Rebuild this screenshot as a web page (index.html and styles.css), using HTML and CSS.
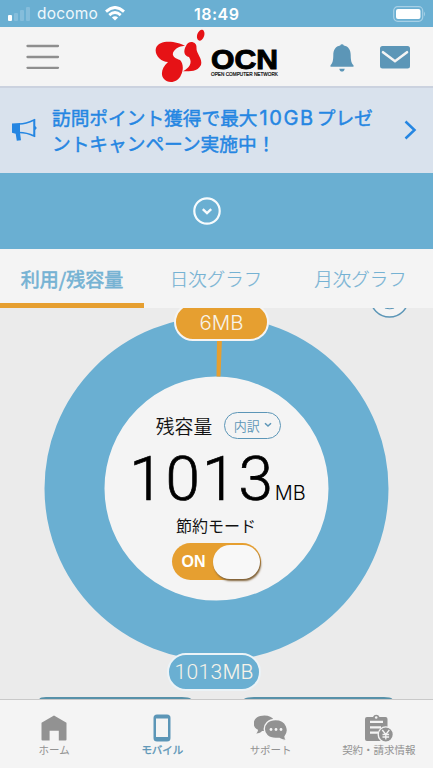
FILE: index.html
```html
<!DOCTYPE html>
<html lang="ja">
<head>
<meta charset="utf-8">
<meta name="viewport" content="width=device-width">
<title>OCN</title>
<link rel="stylesheet" href="styles.css">
</head>
<body>
<div class="status">
  <svg class="signal" width="22" height="14" viewBox="0 0 22 14"><rect x="0" y="8" width="4" height="6" rx="1" fill="#fff"/><g fill="#85bddb"><rect x="6" y="6" width="4" height="8" rx="1"/><rect x="12" y="3" width="4" height="11" rx="1"/><rect x="18" y="0" width="4" height="14" rx="1"/></g></svg>
  <span class="carrier">docomo</span>
  <svg class="wifi" width="20" height="15" viewBox="0 0 20 15" fill="none" stroke="#fff" stroke-width="2.8"><path d="M1 5.6Q10-2.7 19 5.6M4.3 9.1Q10 4 15.7 9.1"/><path d="M10 14.6L6.9 11.5Q10 9 13.1 11.5Z" fill="#fff" stroke="none"/></svg>
  <span class="clock">18:49</span>
  <svg class="battery" width="33" height="16" viewBox="0 0 33 16"><rect x=".7" y=".7" width="29" height="14.6" rx="4" fill="none" stroke="#a7d0e6" stroke-width="1.2"/><rect x="3" y="3" width="24.5" height="10" rx="2" fill="#fff"/><path d="M31 5.5q2 2.5 0 5z" fill="#a7d0e6"/></svg>
</div>
<header class="header">
  <svg class="menu" width="34" height="26" viewBox="0 0 34 26" stroke="#8e8e8e" stroke-width="2.3" stroke-linecap="round"><path d="M1.5 2h30.5M1.5 13h30.5M1.5 23.8h30.5"/></svg>
  <div class="logo">
    <svg class="mark" width="50" height="54" viewBox="0 0 50 54" fill="#e61216"><ellipse cx="45.7" cy="6.2" rx="3.5" ry="5.6" transform="rotate(18 45.7 6.2)"/><path d="M30 17C22 12 4 10 1 19C-1 26 6 33 13 33C7 38 5 46 9 50C13 55 23 54 26 46C29 40 28 34 25 31C19 29 16 26 19 22C22 18 26 17 30 17Z"/><path d="M31 17C33 11 42 12 41.500 19C41 24 48 30 46 36C42 43 36 42 28 42.200C34 39 38 34 34 28C29 27 28 22 31 17Z"/></svg>
    <svg class="wordmark" width="69" height="32" viewBox="0 0 69 32"><text x="0" y="21.500" class="brand" textLength="67" lengthAdjust="spacingAndGlyphs">OCN</text><text x="0" y="29" class="tagline" textLength="67" lengthAdjust="spacingAndGlyphs">OPEN COMPUTER NETWORK</text></svg>
  </div>
  <svg class="bell" width="24" height="29" viewBox="0 0 24 29" fill="#5c96b7"><path d="M10.200 2.500a1.900 1.900 0 0 1 3.600 0C18.500 3.300 20.700 7 20.700 12c0 6 .9 8.300 2.800 10.300v1.400H.5v-1.400C2.400 20.300 3.300 18 3.300 12c0-5 2.200-8.700 6.900-9.500zM9.300 25.700h5.400c-.5 3.800-4.900 3.800-5.400 0z"/></svg>
  <svg class="mail" width="30" height="23" viewBox="0 0 30 23"><rect width="30" height="22.500" rx="2.500" fill="#5c96b7"/><path d="M3 6.200l12 9 12-9" fill="none" stroke="#f4f4f4" stroke-width="2.600" stroke-linecap="round"/></svg>
</header>
<div class="banner">
  <svg class="horn" width="26" height="24" viewBox="0 0 26 24" fill="#2586e2"><path d="M0 5.500l8-.6v9.800l1 7.500-4.200.6-1.100-7L0 14.800z"/><path d="M7 6c6 0 10-1.500 15-4v16c-5-2.500-9-3.500-15-3.500" fill="none" stroke="#2586e2" stroke-width="1.500"/><path d="M22 1h1.300v7l1.500 2-1.500 2v7H22z"/></svg>
  <p class="message">訪問ポイント獲得で最大<span class="size">10GB</span>プレゼ<br>ントキャンペーン実施中！</p>
  <svg class="arrow" width="13" height="20" viewBox="0 0 13 20" fill="none" stroke="#2586e2" stroke-width="2.500"><path d="M1.500 1.500L10.500 10 1.500 18.500"/></svg>
</div>
<div class="expander">
  <svg width="28" height="28" viewBox="0 0 28 28" fill="none" stroke="#f7fbfd" stroke-width="2.200"><circle cx="14" cy="14" r="12.700"/><path d="M9.800 12.200l4.200 3.900 4.200-3.900" stroke-width="2.400"/></svg>
</div>
<nav class="tabs">
  <span class="tab active">利用/残容量</span>
  <span class="tab">日次グラフ</span>
  <span class="tab">月次グラフ</span>
</nav>
<main class="usage">
  <svg class="chart" width="433" height="392" viewBox="0 308 433 392">
    <circle cx="216.500" cy="488.500" r="142" fill="#f4f4f4" stroke="#6aafd2" stroke-width="60"/>
    <path d="M217 338h5l-1.500 38.500h-4z" fill="#e69f30"/>
    <circle cx="389.500" cy="298" r="19" fill="#f4f4f4" stroke="#5c96b7" stroke-width="1.500"/>
    <path d="M385 308q5 1.500 9 0" fill="none" stroke="#5c96b7" stroke-width="1.200"/>
    <path d="M40 700q0-2 6-2h136q7 0 9 2M244 700q3-2 10-2h130q7 0 8 2" fill="none" stroke="#5791a9" stroke-width="1.800"/>
  </svg>
  <span class="pill used">6MB</span>
  <span class="pill left"><span class="digits">1013</span>MB</span>
  <section class="summary">
    <div class="title"><span>残容量</span><span class="details">内訳<svg width="8" height="6" viewBox="0 0 8 6" fill="none" stroke="#5c96b7" stroke-width="1.500"><path d="M1 1.200l3 2.800 3-2.800"/></svg></span></div>
    <div class="amount"><span class="number">1013</span><span class="unit">MB</span></div>
    <div class="mode">節約モード</div>
    <div class="switch"><span>ON</span><i class="knob"></i></div>
  </section>
</main>
<nav class="bottom">
  <div class="item"><svg width="28" height="28" viewBox="0 0 28 28" fill="#929292"><path d="M14 1.500l12.500 7.200v16.800a1 1 0 0 1-1 1h-6.700v-9.700H9.600v9.700H2.500a1 1 0 0 1-1-1V8.700z"/></svg><span>ホーム</span></div>
  <div class="item current"><svg width="28" height="28" viewBox="0 0 28 28"><rect x="5.500" y=".5" width="17" height="27" rx="3.500" fill="#5c96b7"/><rect x="8" y="4.500" width="12" height="18.500" fill="#f4f4f4"/></svg><span>モバイル</span></div>
  <div class="item"><svg width="34" height="28" viewBox="0 0 34 28" fill="#929292"><path d="M10.500 1.500c-13 0-13 12-6.500 14.200 0 2-1 3-2 3.800 3 0 5-1.300 6-2.500h12V6c-2-3-5-4.500-9.500-4.500z"/><path d="M21.500 5.500c-15 0-15 19 0 19h4c2 1.200 4.500 2.200 7.500 1.700-1.500-1-2-2.200-2-3.500 5-6 2-17.200-9.500-17.200z" stroke="#f4f4f4" stroke-width="1.400"/><g fill="#f4f4f4"><circle cx="17" cy="15.500" r="1.400"/><circle cx="22" cy="15.500" r="1.400"/><circle cx="27" cy="15.500" r="1.400"/></g></svg><span>サポート</span></div>
  <div class="item"><svg width="30" height="28" viewBox="0 0 30 28"><path d="M3 3h6a3.500 3.500 0 0 1 6.500 0h6a2 2 0 0 1 2 2v22H3a2 2 0 0 1-2-2V5a2 2 0 0 1 2-2z" fill="#929292"/><circle cx="12.200" cy="3.500" r="1.300" fill="#f4f4f4"/><path d="M6 7.800h13M6 13.400h11M6 18.700h8" stroke="#f4f4f4" stroke-width="2.200"/><circle cx="21.800" cy="20.500" r="7.600" fill="#929292" stroke="#f4f4f4" stroke-width="1.400"/><path d="M18.300 16l3.500 4.500 3.500-4.500M21.800 20.500v5M18.500 20.500h6.600M18.500 23h6.600" fill="none" stroke="#f4f4f4" stroke-width="1.300"/></svg><span>契約・請求情報</span></div>
</nav>
</body>
</html>
```
FILE: styles.css
```css
* { box-sizing: border-box; }
body { margin: 0; width: 433px; height: 768px; overflow: hidden; display: flex; flex-direction: column; background: #ebebeb; font-family: "Noto Sans CJK JP", sans-serif; }
svg { display: block; flex: none; }
.status { height: 27px; flex: none; display: flex; align-items: center; background: #6aafd2; color: #fff; font-family: Inter, sans-serif; padding: 0 7px 0 8px; }
.carrier { font-size: 15.500px; letter-spacing: .2px; margin-left: 7px; width: 61px; color: #eff8fc; }
.wifi { margin-left: 7px; }
.clock { font-size: 16px; font-weight: 600; letter-spacing: .5px; margin-left: 69px; }
.battery { margin-left: auto; }
.header { height: 59px; flex: none; background: #f4f4f4; display: flex; align-items: center; padding: 1px 23px 0 26px; }
.logo { display: flex; margin-left: 95px; align-items: center; }
.mark { margin-top: -3px; }
.wordmark { margin: 11px 0 0 6px; overflow: visible; }
.brand { font: bold 27.500px "Liberation Sans", sans-serif; fill: #000; stroke: #000; stroke-width: 1; }
.tagline { font: 6px "Liberation Sans", sans-serif; fill: #000; stroke: #000; stroke-width: .2; }
.bell { margin-left: 50px; }
.mail { margin-left: auto; }
.banner { height: 87px; flex: none; background: #d9e2ed; border-top: 2px solid #cbd2df; display: flex; align-items: center; padding: 0 16px 2px 12px; color: #2586e2; }
.message { margin: 0 0 0 14px; font-size: 18.700px; line-height: 26px; font-weight: 400; white-space: nowrap; -webkit-text-stroke: .45px; }
.size { font-family: Inter, sans-serif; font-size: 20px; letter-spacing: 1.600px; margin-left: 2px; margin-right: 2px; line-height: 1; }
.arrow { margin-left: auto; }
.expander { height: 76px; flex: none; background: #6aafd2; display: flex; justify-content: center; align-items: center; padding-right: 19px; }
.tabs { height: 59px; flex: none; background: #f4f4f4; display: grid; grid-template-columns: 144px 144px 145px; }
.tab { display: flex; align-items: center; justify-content: center; padding-top: 4px; color: #75b2d3; font-size: 18.500px; font-weight: 300; -webkit-text-stroke: .2px; border-bottom: 5px solid transparent; }
.active { border-color: #e69f30; font-weight: 400; font-size: 19px; -webkit-text-stroke: .6px; }
.usage { height: 391px; flex: none; position: relative; overflow: hidden; }
.chart { position: absolute; left: 0; top: 0; }
.pill { position: absolute; display: flex; align-items: center; justify-content: center; height: 38px; border-radius: 19px; border: 2px solid #f4f4f4; color: #f7f3e9; font: 300 20.500px Inter, sans-serif; }
.used { left: 174px; top: -5px; width: 95px; background: #e69f30; }
.left { left: 167px; top: 345px; width: 94px; background: #6aafd2; border-color: #ecf3f7; font-size: 20px; }
.digits { font-family: Roboto, sans-serif; font-size: 21px; letter-spacing: .3px; }
.summary { position: relative; width: 224px; margin: 102px auto 0 104px; display: flex; flex-direction: column; align-items: center; color: #111; }
.title { display: flex; align-items: center; gap: 12px; height: 30px; font-size: 18.800px; margin-left: 5px; font-weight: 350; }
.details { height: 27px; width: 57px; border: 1.500px solid #5c96b7; border-radius: 14px; display: flex; align-items: center; justify-content: center; gap: 4px; color: #5c96b7; font-size: 13px; }
.amount { display: flex; align-items: baseline; height: 68px; line-height: 70px; margin-top: 4px; font-family: Inter, sans-serif; color: #000; margin-left: 3px; }
.number { font-family: Roboto, sans-serif; font-size: 62px; font-weight: 300; letter-spacing: 2px; -webkit-text-stroke: .7px; }
.unit { font-size: 20px; font-weight: 300; }
.mode { font-size: 16px; line-height: 24px; margin-top: 1px; }
.switch { margin-top: 6px; width: 89px; height: 37px; border-radius: 19px; background: #e69f30; display: flex; align-items: center; justify-content: space-between; padding: 0 1px 0 10px; color: #fff; font: bold 16px "Liberation Sans", sans-serif; }
.knob { width: 47px; height: 34px; border-radius: 17px; background: #f8f8f8; box-shadow: 1px 2px 2px #80633b; }
.bottom { height: 69px; flex: none; background: #f4f4f4; border-top: 1px solid #c9c9c9; display: grid; grid-template-columns: repeat(4, 1fr); }
.item { display: flex; flex-direction: column; align-items: center; padding-top: 14px; color: #929292; font-size: 10.500px; line-height: 16px; white-space: nowrap; }
.item span { margin-top: 0; }
.current { color: #5c96b7; -webkit-text-stroke: .35px; }
```
